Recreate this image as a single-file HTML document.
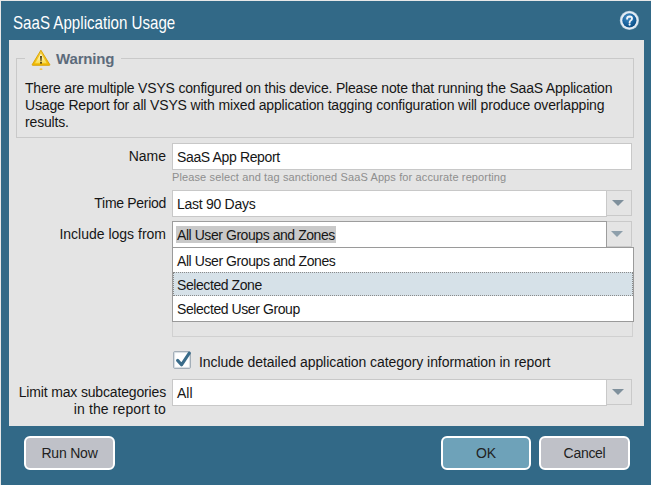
<!DOCTYPE html>
<html><head><meta charset="utf-8">
<style>
*{box-sizing:border-box;margin:0;padding:0}
html,body{width:651px;height:485px;overflow:hidden}
body{position:relative;background:#326987;font-family:"Liberation Sans",sans-serif;color:#161616}
.a{position:absolute}
.t{white-space:nowrap;font-size:14px;line-height:17px}
#topline{left:0;top:0;width:651px;height:1px;background:#e8e8e8}
#leftline{left:0;top:0;width:1px;height:485px;background:#e8e8e8}
#title{left:13px;top:12px;font-size:19px;line-height:22px;color:#fff;transform-origin:0 0;transform:scaleX(0.796);white-space:nowrap}
#panel{left:9px;top:40px;width:635px;height:386px;background:#e4e4e4}
#fs{left:16px;top:58px;width:618px;height:80px;border:1px solid #c9c9c9}
#legend{left:25px;top:48px;width:96px;height:20px;background:#e4e4e4}
#warn{left:56px;top:50px;font-size:15px;font-weight:bold;color:#5c6b7b;line-height:17px;letter-spacing:-0.15px}
.lbl{text-align:right;right:485px}
.inp{left:172px;width:460px;background:#fff;border:1px solid #c8c8c8}
.trig{width:26px;background:#e4e4e4;border:1px solid #c9c9c9}
.tri{position:absolute;left:4.5px;top:9px;width:0;height:0;border-left:6.6px solid transparent;border-right:6.6px solid transparent;border-top:6.8px solid #7f909c}
.btn{height:34px;border:2px solid #fff;border-radius:6px;background:#bfc1c8;font-size:14px;text-align:center;line-height:30px;color:#222}
</style></head><body>
<div class="a" id="topline"></div>
<div class="a" id="leftline"></div>
<div class="a" id="title">SaaS Application Usage</div>
<svg class="a" style="left:619px;top:10px" width="21" height="21" viewBox="0 0 21 21">
<defs><radialGradient id="g" cx="0.4" cy="0.3" r="0.75"><stop offset="0" stop-color="#4a90c4"/><stop offset="0.6" stop-color="#1a64a0"/><stop offset="1" stop-color="#0a4a7e"/></radialGradient>
<radialGradient id="rg" cx="0.5" cy="0.5" r="0.5"><stop offset="0.7" stop-color="#f4f8fb"/><stop offset="0.88" stop-color="#dfe9f2"/><stop offset="1" stop-color="#9fbdd3"/></radialGradient></defs>
<circle cx="10.4" cy="10.4" r="9.6" fill="url(#rg)"/>
<circle cx="10.4" cy="10.4" r="7.1" fill="url(#g)"/>
<path d="M8.1 8.7 Q8.2 6.5 10.7 6.5 Q13.1 6.6 13.0 8.6 Q12.9 9.8 11.7 10.5 Q10.6 11.1 10.6 12.5" fill="none" stroke="#f2f6fa" stroke-width="1.9" stroke-linecap="round"/>
<circle cx="10.6" cy="14.6" r="1.1" fill="#f2f6fa"/>
</svg>
<div class="a" id="panel"></div>
<div class="a" id="fs"></div>
<div class="a" id="legend"></div>
<svg class="a" style="left:31px;top:49px" width="20" height="22" viewBox="0 0 20 22">
<defs><linearGradient id="y" x1="0" y1="0" x2="0" y2="1"><stop offset="0" stop-color="#f7d040"/><stop offset="1" stop-color="#efb800"/></linearGradient>
<linearGradient id="y2" x1="0" y1="0" x2="0" y2="1"><stop offset="0" stop-color="#fffbe0"/><stop offset="1" stop-color="#f8dc50"/></linearGradient></defs>
<path d="M9.9 1.2 L18.8 15.6 Q19.1 16.3 18.4 16.3 L1.6 16.3 Q0.9 16.3 1.2 15.6 Z" fill="url(#y)" stroke="#d8a000" stroke-width="0.9"/>
<path d="M9.9 4.5 L15.8 14.2 L4 14.2 Z" fill="url(#y2)"/>
<path d="M9.1 7 L10.9 7 L10.4 12.4 L9.6 12.4 Z" fill="#3a2c08"/>
<rect x="9.1" y="13.1" width="1.8" height="1.5" fill="#3a2c08"/>
<rect x="8.6" y="19.6" width="2.8" height="1.1" rx="0.5" fill="#f0c030"/>
</svg>
<div class="a" id="warn">Warning</div>
<div class="a t" style="left:25px;top:80px;letter-spacing:-0.19px">There are multiple VSYS configured on this device. Please note that running the SaaS Application</div>
<div class="a t" style="left:25px;top:97px;letter-spacing:-0.16px">Usage Report for all VSYS with mixed application tagging configuration will produce overlapping</div>
<div class="a t" style="left:25px;top:114px;letter-spacing:-0.16px">results.</div>

<div class="a t lbl" style="top:148px">Name</div>
<div class="a inp" style="top:143px;height:27px"></div>
<div class="a t" style="left:177px;top:149px;letter-spacing:-0.36px">SaaS App Report</div>
<div class="a" style="left:172px;top:171px;font-size:11px;line-height:13px;color:#8e8e8e;white-space:nowrap;letter-spacing:0.12px">Please select and tag sanctioned SaaS Apps for accurate reporting</div>

<div class="a t lbl" style="top:195px;letter-spacing:-0.3px">Time Period</div>
<div class="a inp" style="top:190px;height:27px;width:435px"></div>
<div class="a trig" style="left:606px;top:190px;height:26px"><div class="tri"></div></div>
<div class="a t" style="left:177px;top:196px;letter-spacing:-0.28px">Last 90 Days</div>

<div class="a t lbl" style="top:226px">Include logs from</div>
<div class="a inp" style="top:221px;height:27px;width:435px;border-color:#9d9d9d"></div>
<div class="a trig" style="left:607px;top:221px;height:26px;width:25px;border-left:none"><div class="tri" style="left:4.4px;border-top-color:#8e9fab"></div></div>
<div class="a t" style="left:176px;top:226px;height:17px;line-height:18px;background:#c9c9c9;padding:0 1px;letter-spacing:-0.44px">All User Groups and Zones</div>

<div class="a inp" style="top:300px;height:37px;width:461px;background:#e4e4e4;border-color:#d0d0d0"></div>
<div class="a" style="left:172px;top:247px;width:462px;height:75px;background:#fff;border:1px solid #9a9a9a"></div>
<div class="a" style="left:173px;top:272px;width:460px;height:24px;background:#d6e1e8;border:1px dotted #8a8a8a"></div>
<div class="a t" style="left:177px;top:253px;letter-spacing:-0.42px">All User Groups and Zones</div>
<div class="a t" style="left:177px;top:277px;letter-spacing:-0.42px">Selected Zone</div>
<div class="a t" style="left:177px;top:301px;letter-spacing:-0.42px">Selected User Group</div>

<div class="a" style="left:173px;top:351px;width:18px;height:18px;background:#fff;border:1px solid #a3aeb8;border-radius:2px;box-shadow:inset 0 0 1px 1px #d5dce2"></div>
<svg class="a" style="left:173px;top:349px" width="20" height="20" viewBox="0 0 20 20"><path d="M4.6 11.4 L8.5 15.8 L16.3 4.2" fill="none" stroke="#3a6c8a" stroke-width="3.1" stroke-linecap="round" stroke-linejoin="round"/></svg>
<div class="a t" style="left:199px;top:354px;letter-spacing:-0.06px">Include detailed application category information in report</div>

<div class="a t lbl" style="top:384px;letter-spacing:-0.16px">Limit max subcategories</div>
<div class="a t lbl" style="top:401px;letter-spacing:0.12px">in the report to</div>
<div class="a inp" style="top:379px;height:27px;width:435px"></div>
<div class="a trig" style="left:606px;top:379px;height:26px"><div class="tri" style="top:8.5px"></div></div>
<div class="a t" style="left:177px;top:385px">All</div>

<div class="a btn" style="left:24px;top:436px;width:91px;letter-spacing:-0.2px">Run Now</div>
<div class="a btn" style="left:441px;top:436px;width:90px;background:#6ea2b9">OK</div>
<div class="a btn" style="left:539px;top:436px;width:91px;letter-spacing:-0.3px">Cancel</div>
</body></html>
